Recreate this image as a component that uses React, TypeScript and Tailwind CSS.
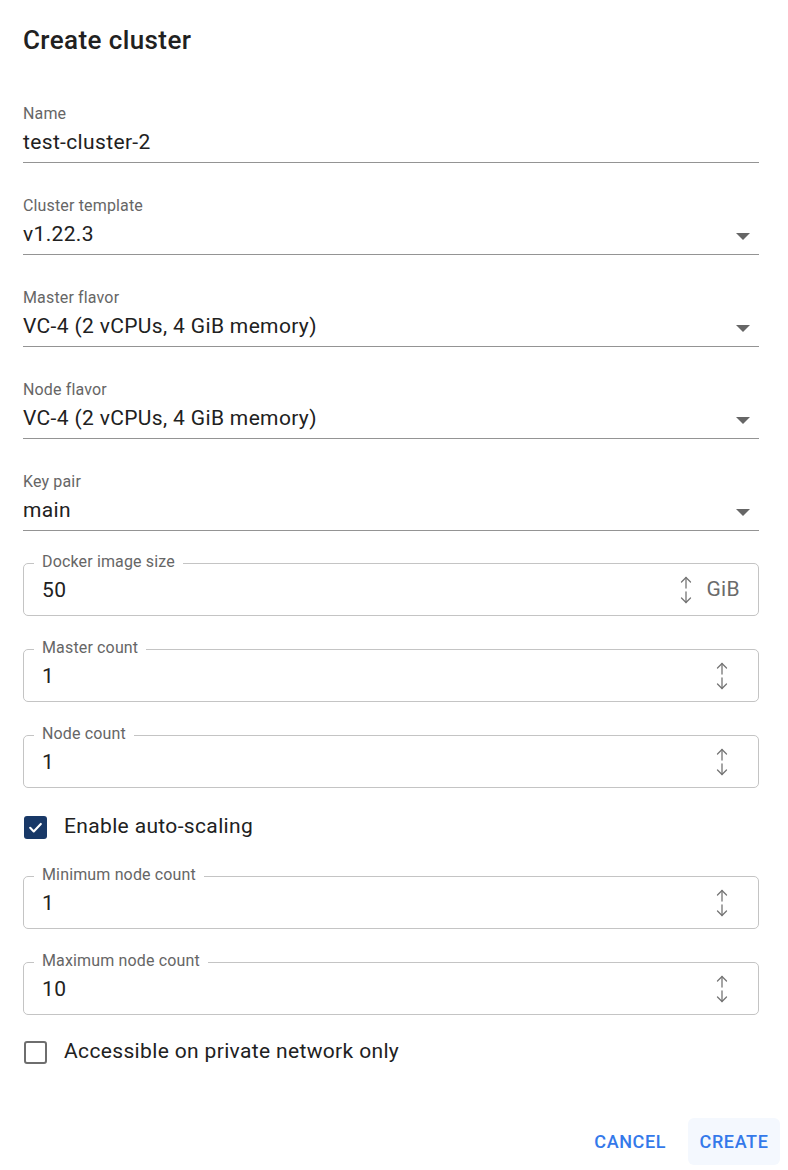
import React, { useState } from 'react';

const FONT = "font-['Roboto','Liberation_Sans',sans-serif]";

interface SelectField {
  label: string;
  value: string;
  select: boolean;
}

const UNDERLINED: SelectField[] = [
  { label: 'Name', value: 'test-cluster-2', select: false },
  { label: 'Cluster template', value: 'v1.22.3', select: true },
  { label: 'Master flavor', value: 'VC-4 (2 vCPUs, 4 GiB memory)', select: true },
  { label: 'Node flavor', value: 'VC-4 (2 vCPUs, 4 GiB memory)', select: true },
  { label: 'Key pair', value: 'main', select: true },
];

function UpDown() {
  return (
    <svg width="14" height="28" viewBox="0 0 14 28" fill="none" stroke="#757575" strokeWidth="1.3" strokeLinecap="round" strokeLinejoin="round">
      {/* up arrow */}
      <path d="M7 1.5v10.5" />
      <path d="M2.5 6l4.5-4.5 4.5 4.5" />
      {/* down arrow */}
      <path d="M7 16v10.5" />
      <path d="M2.5 22l4.5 4.5 4.5-4.5" />
    </svg>
  );
}

function UnderlinedField({ field }: { field: SelectField }) {
  return (
    <div className="mb-8 border-b border-[#949494] pt-px pb-[6px]">
      <div className="text-[16px] leading-5 tracking-[0.15px] text-[#666666]">{field.label}</div>
      <div className="mt-1 flex h-7 items-center justify-between">
        <span className="text-[21px] leading-7 tracking-[0.35px] text-[#212121]">{field.value}</span>
        {field.select && (
          <svg width="14" height="7" viewBox="0 0 14 7" className="mt-[4px] mr-[9px]">
            <path d="M0 0h14L7 7z" fill="#666666" />
          </svg>
        )}
      </div>
    </div>
  );
}

function OutlinedNumber({ label, value, unit }: { label: string; value: string; unit?: string }) {
  return (
    <fieldset className="m-0 h-[58px] rounded-[5px] border border-[#c4c4c4] px-[10px] py-0">
      <legend className="px-2 text-[16px] leading-[10px] tracking-[0.15px] text-[#666666]">
        <span className="relative top-[-1px]">{label}</span>
      </legend>
      <div className="flex h-[43px] items-center justify-between pl-2">
        <span className="text-[21px] leading-7 tracking-[0.35px] text-[#212121]">{value}</span>
        <div className={`flex items-center ${unit ? 'mr-[8px] gap-[13px]' : 'mr-[19px]'}`}>
          <UpDown />
          {unit && <span className="text-[21px] tracking-[0.35px] text-[#6b6b6b]">{unit}</span>}
        </div>
      </div>
    </fieldset>
  );
}

function Checkbox({ checked, label, onToggle }: { checked: boolean; label: string; onToggle: () => void }) {
  return (
    <label className="flex h-6 cursor-pointer items-center" onClick={onToggle}>
      {checked ? (
        <span className="ml-px flex h-[23px] w-[23px] items-center justify-center rounded-[3px] bg-[#183867]">
          <svg width="17" height="17" viewBox="0 0 24 24" fill="none" stroke="white" strokeWidth="3" strokeLinecap="round" strokeLinejoin="round">
            <path d="M4.5 12.5l5 5 10-10.5" />
          </svg>
        </span>
      ) : (
        <span className="ml-px h-[23px] w-[23px] rounded-[3px] border-2 border-[#6e6e6e]" />
      )}
      <span className="ml-[17px] text-[21px] tracking-[0.35px] text-[#212121]">{label}</span>
    </label>
  );
}

export default function App() {
  const [autoScale, setAutoScale] = useState(true);
  const [privateOnly, setPrivateOnly] = useState(false);

  return (
    <div className={`${FONT} h-[1170px] w-[788px] bg-white px-[23px] pt-[24px]`}>
      {/* Header */}
      <h1 className="text-[26px] leading-8 font-medium tracking-[0.4px] text-[#212121]">Create cluster</h1>

      {/* Form */}
      <div className="mt-[47px] w-[736px]">
        {UNDERLINED.map((f) => (
          <UnderlinedField key={f.label} field={f} />
        ))}

        <div className="-mt-[5px] flex flex-col gap-[28px]">
          <OutlinedNumber label="Docker image size" value="50" unit="GiB" />
          <OutlinedNumber label="Master count" value="1" />
          <OutlinedNumber label="Node count" value="1" />
        </div>

        <div className="mt-[27px] mb-[32px]">
          <Checkbox checked={autoScale} label="Enable auto-scaling" onToggle={() => setAutoScale(!autoScale)} />
        </div>

        <div className="flex flex-col gap-[28px]">
          <OutlinedNumber label="Minimum node count" value="1" />
          <OutlinedNumber label="Maximum node count" value="10" />
        </div>

        <div className="mt-[25px]">
          <Checkbox checked={privateOnly} label="Accessible on private network only" onToggle={() => setPrivateOnly(!privateOnly)} />
        </div>
      </div>

      {/* Actions */}
      <div className="mt-[54px] mr-[-15px] flex justify-end gap-[10px]">
        <button className="h-[47px] rounded-md px-3 text-[18px] font-medium tracking-[0.6px] text-[#3479ea]">CANCEL</button>
        <button className="h-[47px] w-[92px] rounded-md bg-[#f4f8fe] text-[18px] font-medium tracking-[0.6px] text-[#3479ea]">CREATE</button>
      </div>
    </div>
  );
}
